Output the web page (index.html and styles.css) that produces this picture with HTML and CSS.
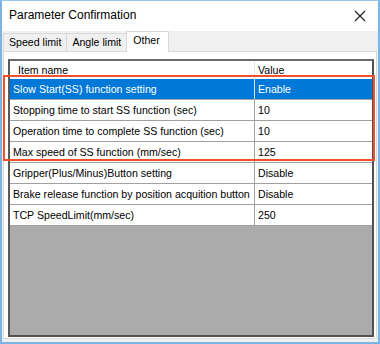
FILE: index.html
```html
<!DOCTYPE html>
<html lang="en">
<head>
    <meta charset="UTF-8">
    <title>Parameter Confirmation</title>
    <link rel="stylesheet" href="styles.css">
</head>
<body>
    <div class="window">
        <div class="titlebar">
            <span class="title">Parameter Confirmation</span>
            <button class="close" aria-label="Close">
                <svg width="12" height="12" viewBox="0 0 12 12"><path d="M1 1L11 11M11 1L1 11" stroke="#1a1a1a" stroke-width="1.1" fill="none"/></svg>
            </button>
        </div>
        <div class="client">
            <div class="tabs">
                <div class="tab">Speed limit</div>
                <div class="tab">Angle limit</div>
                <div class="tab active">Other</div>
            </div>
            <div class="tab-page">
                <div class="grid">
                    <div class="row header">
                        <div class="cell name head-name">Item name</div>
                        <div class="cell value">Value</div>
                    </div>
                    <div class="row selected">
                        <div class="cell name">Slow Start(SS) function setting</div>
                        <div class="cell value">Enable</div>
                    </div>
                    <div class="row">
                        <div class="cell name">Stopping time to start SS function (sec)</div>
                        <div class="cell value">10</div>
                    </div>
                    <div class="row">
                        <div class="cell name">Operation time to complete SS function (sec)</div>
                        <div class="cell value">10</div>
                    </div>
                    <div class="row">
                        <div class="cell name">Max speed of SS function (mm/sec)</div>
                        <div class="cell value">125</div>
                    </div>
                    <div class="row">
                        <div class="cell name">Gripper(Plus/Minus)Button setting</div>
                        <div class="cell value">Disable</div>
                    </div>
                    <div class="row">
                        <div class="cell name">Brake release function by position acquition button</div>
                        <div class="cell value">Disable</div>
                    </div>
                    <div class="row">
                        <div class="cell name">TCP SpeedLimit(mm/sec)</div>
                        <div class="cell value">250</div>
                    </div>
                </div>
            </div>
        </div>
        <div class="highlight"></div>
    </div>
</body>
</html>
```

FILE: styles.css
```css
html, body {
    margin: 0;
    padding: 0;
    width: 380px;
    height: 344px;
    overflow: hidden;
    font-family: 'Liberation Sans', Arial, sans-serif;
    background-color: #ffffff;
}
.window {
    position: relative;
    box-sizing: border-box;
    width: 380px;
    height: 344px;
    display: flex;
    flex-direction: column;
    border-left: 2px solid #7db4e6;
    border-right: 2px solid #7db4e6;
    border-bottom: 2px solid #7db4e6;
    border-top: 1px solid #9cc6ec;
    background: #f0f0f0;
}
.titlebar {
    height: 30px;
    flex-shrink: 0;
    display: flex;
    align-items: center;
    justify-content: space-between;
    background: #ffffff;
    padding-left: 7px;
}
.title {
    font-size: 12px;
    color: #000;
    margin-top: -2px;
}
.close {
    width: 30px;
    height: 30px;
    margin-right: 3px;
    border: none;
    background: transparent;
    padding: 0;
    display: flex;
    align-items: center;
    justify-content: center;
}
.client {
    flex: 1;
    display: flex;
    flex-direction: column;
    padding: 1px 1px 3px 1px;
}
.tabs {
    display: flex;
    align-items: flex-end;
    height: 19px;
    position: relative;
    z-index: 1;
}
.tab {
    box-sizing: border-box;
    height: 18px;
    padding: 0 5px;
    font-size: 10.6px;
    line-height: 17px;
    color: #000;
    background: #f0f0f0;
    border: 1px solid #d9d9d9;
    border-bottom: none;
    margin-right: -1px;
}
.tab.active {
    height: 21px;
    margin-bottom: -1px;
    padding: 0 8px 0 6px;
    background: #ffffff;
    line-height: 17px;
}
.tab-page {
    flex: 1;
    display: flex;
    background: #ffffff;
    border: 1px solid #d9d9d9;
    padding: 7px 2px 1px 4px;
}
.grid {
    flex: 1;
    background: #ababab;
    border: 2px solid #505050;
    border-top-color: #6a6a6a;
    border-left-color: #5a5a5a;
}
.row {
    display: flex;
    height: 20px;
    background: #ffffff;
    border-bottom: 1px solid #a0a0a0;
    font-size: 10.6px;
    line-height: 20px;
    color: #000;
}
.row.header {
    height: 18px;
    line-height: 18px;
    border-bottom: none;
}
.row.selected {
    background: #0078d7;
    color: #ffffff;
}
.cell {
    box-sizing: border-box;
    padding-left: 3px;
    white-space: nowrap;
    overflow: hidden;
}
.cell.name {
    width: 245px;
    border-right: 1px solid #a0a0a0;
}
.cell.head-name {
    padding-left: 8px;
    border-right-color: #e5e5e5;
}
.row.selected .cell.name {
    border-right-color: #cfe3f5;
}
.cell.value {
    flex: 1;
}
.highlight {
    position: absolute;
    left: 1px;
    top: 74px;
    width: 372px;
    height: 86px;
    box-sizing: border-box;
    border: 2px solid #f0512b;
    pointer-events: none;
}
```
